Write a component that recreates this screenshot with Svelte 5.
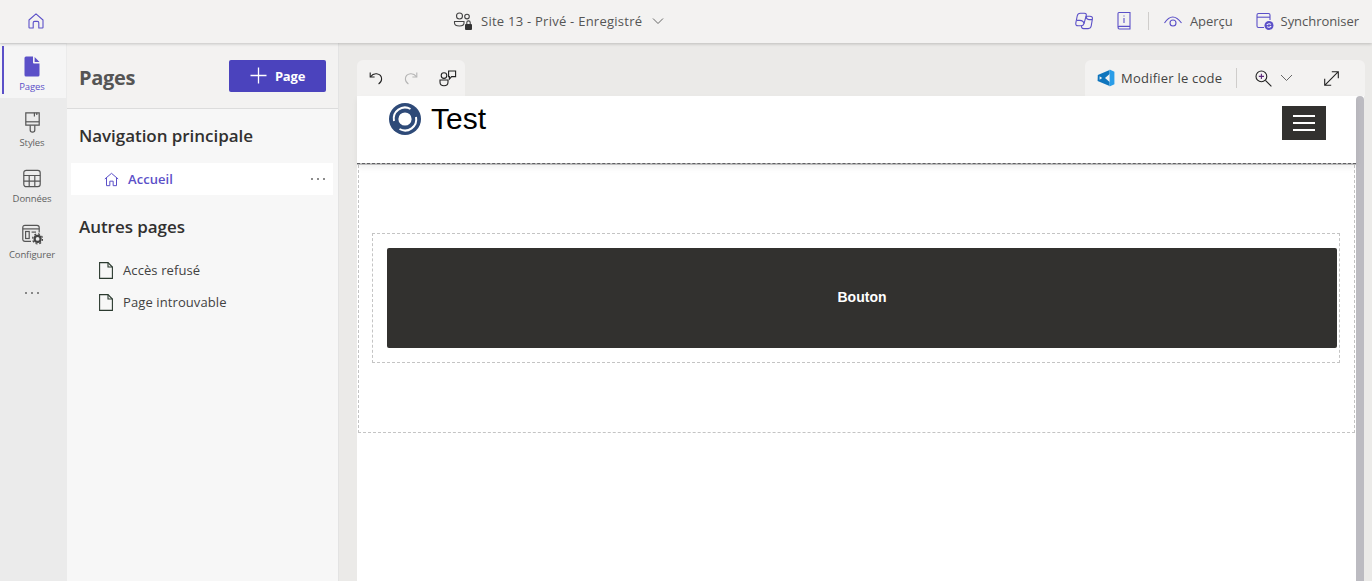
<script>
  const rail = [
    { label: "Pages", active: true },
    { label: "Styles" },
    { label: "Données" },
    { label: "Configurer" }
  ];
  const others = ["Accès refusé", "Page introuvable"];
</script>

<div class="studio">
  <header class="topbar">
    <div class="top-home">
      <svg width="18" height="18" viewBox="0 0 18 18" fill="none" stroke="#5b50c8" stroke-width="1.1"><path d="M2 8 L9 1.8 L16 8 V15.4 Q16 16 15.4 16 H11.8 V10.8 Q11.8 9.4 10.4 9.4 H7.6 Q6.2 9.4 6.2 10.8 V16 H2.6 Q2 16 2 15.4 Z" stroke-linejoin="round"/></svg>
    </div>
    <div class="top-center">
      <svg width="20" height="20" viewBox="0 0 20 20" fill="none" stroke="#444" stroke-width="1.1"><circle cx="6.5" cy="5" r="3"/><circle cx="14" cy="5.6" r="2.3"/><path d="M1.5 10.5 H11 V12 Q11 15 6.5 15 Q1.5 15 1.5 12 Z"/><rect x="12" y="13" width="7" height="6" rx="1" fill="#333" stroke="none"/><path d="M13.8 13 V11.6 a1.7 1.7 0 0 1 3.4 0 V13"/></svg>
      <span class="site">Site 13 - Privé - Enregistré</span>
      <svg class="chev" width="12" height="12" viewBox="0 0 12 12" fill="none" stroke="#666" stroke-width="1"><path d="M1 3.5 L6 8.5 L11 3.5"/></svg>
    </div>
    <div class="top-right">
      <svg width="20" height="20" viewBox="0 0 20 20" fill="none" stroke="#5b50c8" stroke-width="1.1" stroke-linejoin="round"><path d="M6.4 2.2 H10.4 Q12.8 2.2 12.2 4.6 L10 12.6 Q9.4 14.8 7.2 14.8 H4 Q1.4 14.8 1.8 12.2 L3.2 5 Q3.8 2.2 6.4 2.2 Z"/><path d="M12 5.2 H15.8 Q18.8 5.2 18.4 8 L17.2 15 Q16.8 17.6 14.2 17.6 H9.6 Q7.2 17.6 7.6 14.8"/><path d="M10 12.6 Q9.4 9.4 5.8 9.4 H3"/><path d="M12.2 5 Q12 8.2 15 8.6 H18"/></svg>
      <svg class="book" width="16" height="20" viewBox="0 0 16 20" fill="none" stroke="#5b50c8" stroke-width="1.1"><path d="M2 16 V2.6 Q2 1.5 3 1.5 H14 V18 H3.4 Q2 18 2 16.4 Q2 15.4 3.4 15.4 H14"/><path d="M8 7 V12 M8 4.4 V5.6"/></svg>
      <span class="vsep"></span>
      <div class="top-action">
        <svg width="20" height="14" viewBox="0 0 20 14" fill="none" stroke="#5b50c8" stroke-width="1.1"><path d="M1.5 9 Q9.5 -3 18.5 9"/><circle cx="10" cy="9" r="3"/></svg>
        <span>Aperçu</span>
      </div>
      <div class="top-action sync">
        <svg width="20" height="20" viewBox="0 0 20 20" fill="none" stroke="#5b50c8" stroke-width="1.1"><path d="M9 16.5 H3.5 Q2 16.5 2 15 V4 Q2 2.5 3.5 2.5 H13.5 Q15 2.5 15 4 V9"/><path d="M2 6.2 H15"/><circle cx="14" cy="14.5" r="4.5" fill="#5b50c8" stroke="none"/><path d="M11.8 14 Q13.5 11.8 16 13.4 M16.2 15 Q14.5 17.2 12 15.6" stroke="#fff"/></svg>
        <span>Synchroniser</span>
      </div>
    </div>
  </header>

  <div class="body">
    <nav class="rail">
      {#each rail as item}
        <div class="rail-item" class:active={item.active}>
          {#if item.label === "Pages"}
            <svg width="16" height="21" viewBox="0 0 16 21"><path d="M2 0.5 H9 V6.6 Q9 7.6 10 7.6 H15.5 V19 Q15.5 20.5 14 20.5 H2 Q0.5 20.5 0.5 19 V2 Q0.5 0.5 2 0.5 Z" fill="#5b50c8"/><path d="M10.6 1 L15.5 6 H10.6 Z" fill="#5b50c8"/></svg>
          {:else if item.label === "Styles"}
            <svg width="15" height="21" viewBox="0 0 15 21" fill="none" stroke="#555" stroke-width="1.2"><path d="M0.8 0.8 H14.2 V13.2 H0.8 Z"/><path d="M0.8 9.8 H14.2"/><path d="M5.2 13.2 V18 Q5.2 20.2 7.5 20.2 Q9.8 20.2 9.8 18 V13.2"/><path d="M9.4 0.8 V4.4 M11.8 0.8 V3"/></svg>
          {:else if item.label === "Données"}
            <svg width="18" height="18" viewBox="0 0 18 18" fill="none" stroke="#555" stroke-width="1.2"><rect x="0.8" y="0.8" width="16.4" height="16.4" rx="2.4"/><path d="M0.8 6 H17.2 M0.8 11.6 H17.2 M6.2 6 V17.2 M11.8 6 V17.2"/></svg>
          {:else}
            <svg width="21" height="20" viewBox="0 0 21 20" fill="none" stroke="#555" stroke-width="1.2"><path d="M9 16.8 H3 Q0.8 16.8 0.8 14.8 V3 Q0.8 0.8 3 0.8 H15 Q17.2 0.8 17.2 3 V8"/><path d="M0.8 4.4 H17.2"/><rect x="3.6" y="7" width="3.6" height="7"/><path d="M9.6 7.6 H14"/><circle cx="15.6" cy="14.4" r="3" stroke="#444" stroke-width="2.2"/><circle cx="15.6" cy="14.4" r="5" stroke="#444" stroke-width="1.2" stroke-dasharray="2 1.9"/></svg>
          {/if}
          <span>{item.label}</span>
        </div>
      {/each}
      <div class="rail-more">
        <i></i><i></i><i></i>
      </div>
    </nav>

    <aside class="panel">
      <div class="panel-head">
        <h1>Pages</h1>
        <button class="add">
          <svg width="17" height="17" viewBox="0 0 17 17" stroke="#fff" stroke-width="1.3"><path d="M8.5 0.5 V16.5 M0.5 8.5 H16.5"/></svg>
          Page
        </button>
      </div>
      <h2 class="nav-title">Navigation principale</h2>
      <div class="home-row">
        <svg width="15" height="15" viewBox="0 0 18 18" fill="none" stroke="#5b50c8" stroke-width="1.2"><path d="M1 8.4 L9 1.6 L17 8.4 M3 7 V16.4 H7 V11 H11 V16.4 H15 V7"/></svg>
        <span>Accueil</span>
        <div class="dots"><i></i><i></i><i></i></div>
      </div>
      <h2 class="other-title">Autres pages</h2>
      {#each others as page}
        <div class="page-row">
          <svg width="14" height="17" viewBox="0 0 14 17" fill="none" stroke="#2b3a2f" stroke-width="1.1"><path d="M0.6 0.6 H9 L13.4 5 V16.4 H0.6 Z"/><path d="M9 0.6 V5 H13.4"/></svg>
          <span>{page}</span>
        </div>
      {/each}
    </aside>

    <main class="canvas">
      <div class="toolbars">
        <div class="tab tab-left">
          <svg width="14" height="14" viewBox="0 0 14 14" fill="none" stroke="#222" stroke-width="1.1"><path d="M1.2 1.5 V6 H5.6"/><path d="M1.4 5.8 Q4 2.4 7.6 2.8 Q12.6 3.6 12.6 8 Q12.6 11 9.6 13"/></svg>
          <svg width="14" height="14" viewBox="0 0 14 14" fill="none" stroke="#b5b5b5" stroke-width="1.1"><path d="M12.8 1.5 V6 H8.4"/><path d="M12.6 5.8 Q10 2.4 6.4 2.8 Q1.4 3.6 1.4 8 Q1.4 11 4.4 13"/></svg>
          <svg width="18" height="17" viewBox="0 0 18 17" fill="none" stroke="#222" stroke-width="1.1"><circle cx="5" cy="5.6" r="2.8"/><path d="M1 10 H9 V12 Q9 15.8 5 15.8 Q1 15.8 1 12 Z"/><path d="M9.6 1 H16.6 V6.6 H12.6 L10.4 9 V6.6 H9.6 Z"/></svg>
        </div>
        <div class="tab tab-right">
          <svg width="18" height="18" viewBox="0 0 18 18"><path d="M12.6 1 L0.8 6 L0.6 12 L12.6 17 L12.6 13 L8 9 L12.6 5 Z M2.6 7.2 L5.2 9 L2.6 10.8 Z" fill="#0f75bd" fill-rule="evenodd"/><path d="M12.6 0.6 L17.4 2.8 V15.2 L12.6 17.4 Z" fill="#2a9de8"/></svg>
          <span class="code">Modifier le code</span>
          <span class="tab-sep"></span>
          <svg class="zoom" width="17" height="17" viewBox="0 0 17 17" fill="none" stroke="#222" stroke-width="1.1"><circle cx="6.4" cy="6.4" r="5.4"/><path d="M10.4 10.4 L16.4 16.4"/><path d="M6.4 3.8 V9 M3.8 6.4 H9" stroke="#5c2a7a"/></svg>
          <svg class="zoom-chev" width="13" height="8" viewBox="0 0 13 8" fill="none" stroke="#666" stroke-width="1"><path d="M1 1 L6.5 6.5 L12 1"/></svg>
          <svg class="expand" width="15" height="15" viewBox="0 0 15 15" fill="none" stroke="#222" stroke-width="1.1"><path d="M0.7 14.3 L14.3 0.7 M7.8 0.7 H14.3 V7.2 M0.7 7.8 V14.3 H7.2"/></svg>
        </div>
      </div>

      <div class="frame">
        <div class="preview">
          <div class="site-head">
            <div class="brand">
              <svg width="32" height="32" viewBox="0 0 32 32" fill="none"><circle cx="16" cy="16" r="16" fill="#2e4a78"/><path d="M5 18 A11.2 11.2 0 0 1 21.5 6 M27 14 A11.2 11.2 0 0 1 10.5 26" stroke="#fff" stroke-width="2"/><circle cx="16" cy="16" r="6.6" fill="#fff"/></svg>
              <span>Test</span>
            </div>
            <div class="burger"><i></i><i></i><i></i></div>
          </div>
          <section class="section">
            <div class="column">
              <div class="cta">Bouton</div>
            </div>
          </section>
        </div>
        <div class="scroll"></div>
      </div>
    </main>
  </div>
</div>

<style>
  :global(body) {
    margin: 0;
    overflow: hidden;
  }

  .studio {
    width: 1372px;
    height: 581px;
    display: flex;
    flex-direction: column;
    font-family: "Open Sans", "Noto Sans", sans-serif;
    color: #323130;
    overflow: hidden;
  }

  .topbar {
    height: 43px;
    box-sizing: border-box;
    padding-bottom: 2px;
    flex: none;
    display: flex;
    align-items: center;
    position: relative;
    z-index: 2;
    background: #f3f2f1;
    box-shadow: 0 1px 3px rgba(0, 0, 0, 0.2);
    font-size: 13px;
    letter-spacing: -0.05px;
    color: #555;
  }

  .top-home {
    width: 72px;
    display: flex;
    justify-content: center;
    padding-top: 1px;
  }

  .top-center {
    display: flex;
    align-items: center;
    margin-left: 381px;
  }

  .site {
    margin-left: 8px;
    letter-spacing: 0.25px;
  }

  .chev {
    margin-left: 10px;
  }

  .top-right {
    margin-left: auto;
    display: flex;
    align-items: center;
    padding-right: 13px;
  }

  .book {
    margin-left: 22px;
  }

  .vsep {
    width: 1px;
    height: 18px;
    background: #cfcdcb;
    margin: 0 14px 0 16px;
  }

  .top-action {
    display: flex;
    align-items: center;
    gap: 7px;
  }

  .sync {
    margin-left: 22px;
    gap: 6px;
  }

  .body {
    flex: 1;
    display: flex;
    min-height: 0;
  }

  .rail {
    width: 67px;
    flex: none;
    background: #ebebeb;
    display: flex;
    flex-direction: column;
    padding-top: 1px;
    box-sizing: border-box;
  }

  .rail-item {
    height: 56px;
    display: flex;
    flex-direction: column;
    align-items: center;
    justify-content: flex-start;
    padding: 12px 3px 0 0;
    box-sizing: border-box;
    gap: 3px;
    font-size: 9.5px;
    letter-spacing: -0.1px;
    color: #616161;
    line-height: 13px;
  }

  .rail-item svg {
    height: 21px;
  }

  .rail-item.active {
    background: #f5f5f5;
    color: #5b50c8;
    position: relative;
    height: 54px;
    margin-bottom: 2px;
    margin-right: 1px;
    padding-right: 2px;
  }

  .rail-item.active::before {
    content: "";
    position: absolute;
    left: 2px;
    top: 2px;
    bottom: 4px;
    width: 2px;
    background: #5b50c8;
  }

  .rail-more {
    display: flex;
    justify-content: center;
    gap: 4px;
    margin-top: 24px;
    padding-right: 3px;
  }

  .rail-more i,
  .dots i {
    width: 2px;
    height: 2px;
    background: #666;
    border-radius: 50%;
  }

  .panel {
    width: 271px;
    flex: none;
    background: #f7f7f7;
    border-right: 1px solid #e3e3e3;
  }

  .panel-head {
    height: 66px;
    box-sizing: border-box;
    background: #f3f2f1;
    border-bottom: 1px solid #dcdcdc;
    display: flex;
    align-items: center;
    justify-content: space-between;
    padding: 0 12px 0 12px;
  }

  h1 {
    margin: 4px 0 0;
    font-size: 20px;
    font-weight: 700;
    letter-spacing: -0.3px;
    color: #555;
  }

  .add {
    width: 97px;
    height: 32px;
    display: flex;
    align-items: center;
    justify-content: center;
    gap: 8px;
    border: 0;
    border-radius: 2px;
    background: #4b43bd;
    color: #fff;
    font-family: inherit;
    font-size: 13px;
    font-weight: 700;
    letter-spacing: -0.2px;
  }

  h2 {
    margin: 0;
    padding-left: 12px;
    font-size: 17px;
    font-weight: 600;
    letter-spacing: -0.05px;
    color: #323130;
    line-height: 24px;
  }

  .nav-title {
    margin-top: 15px;
  }

  .home-row {
    height: 32px;
    margin: 15px 5px 0 4px;
    background: #fff;
    display: flex;
    align-items: center;
    padding-left: 33px;
    font-size: 13px;
    font-weight: 600;
    letter-spacing: 0.05px;
    color: #5b50c8;
  }

  .home-row span {
    margin-left: 9px;
  }

  .dots {
    margin-left: auto;
    margin-right: 8px;
    display: flex;
    gap: 4px;
  }

  .other-title {
    margin-top: 20px;
    margin-bottom: 15px;
  }

  .page-row {
    height: 32px;
    display: flex;
    align-items: center;
    gap: 10px;
    padding-left: 32px;
    font-size: 13px;
    letter-spacing: 0.1px;
    color: #424242;
  }

  .canvas {
    flex: 1;
    min-width: 0;
    background: #ebeae8;
    padding: 17px 7px 0 18px;
    display: flex;
    flex-direction: column;
  }

  .toolbars {
    height: 36px;
    flex: none;
    display: flex;
    justify-content: space-between;
  }

  .tab {
    background: #f3f2f1;
    border-radius: 6px 6px 0 0;
    display: flex;
    align-items: center;
  }

  .tab-left {
    width: 108px;
    box-sizing: border-box;
    padding-left: 12px;
    gap: 21px;
  }

  .tab-right {
    width: 280px;
    box-sizing: border-box;
    padding-left: 12px;
    font-size: 13px;
    letter-spacing: 0.23px;
    color: #424242;
  }

  .code {
    margin-left: 6px;
  }

  .tab-sep {
    width: 1px;
    height: 20px;
    background: #cfcdcb;
    margin: 0 18px 0 14px;
  }

  .zoom-chev {
    margin-left: 8px;
  }

  .expand {
    margin-left: 31px;
  }

  .frame {
    flex: 1;
    min-height: 0;
    display: flex;
    background: #fff;
    margin-right: 1px;
  }

  .preview {
    flex: 1;
    min-width: 0;
  }

  .scroll {
    width: 8px;
    background: #bcbbc1;
    border-radius: 4px 4px 0 0;
  }

  .site-head {
    height: 69px;
    box-sizing: border-box;
    border-bottom: 2px solid #bdbdbd;
    box-shadow: 0 3px 6px rgba(0, 0, 0, 0.06);
    display: flex;
    justify-content: space-between;
    padding: 7px 30px 0 32px;
    position: relative;
  }

  .site-head::after {
    content: "";
    position: absolute;
    left: 0;
    right: 0;
    bottom: -1px;
    border-top: 1px dashed #5f5f63;
  }

  .brand {
    display: flex;
    align-items: flex-start;
    gap: 10px;
    font-family: "Liberation Sans", Arial, sans-serif;
    font-size: 30px;
    line-height: 32px;
    color: #000;
  }

  .burger {
    width: 44px;
    height: 34px;
    margin-top: 3px;
    background: #32312f;
    display: flex;
    flex-direction: column;
    align-items: center;
    justify-content: center;
    gap: 5px;
  }

  .burger i {
    width: 22px;
    height: 2px;
    background: #fff;
  }

  .section {
    height: 268px;
    box-sizing: border-box;
    border: 1px dashed #c4c4c4;
    border-top: 0;
    margin: 0 1px;
    padding: 68px 14px 0 13px;
  }

  .column {
    height: 130px;
    box-sizing: border-box;
    border: 1px dashed #c4c4c4;
    padding: 14px 2px 14px 14px;
  }

  .cta {
    height: 100px;
    padding-bottom: 2px;
    box-sizing: border-box;
    border-radius: 2px;
    background: #32312f;
    color: #fff;
    font-family: "Liberation Sans", Arial, sans-serif;
    font-size: 14px;
    font-weight: 700;
    display: flex;
    align-items: center;
    justify-content: center;
  }
</style>
